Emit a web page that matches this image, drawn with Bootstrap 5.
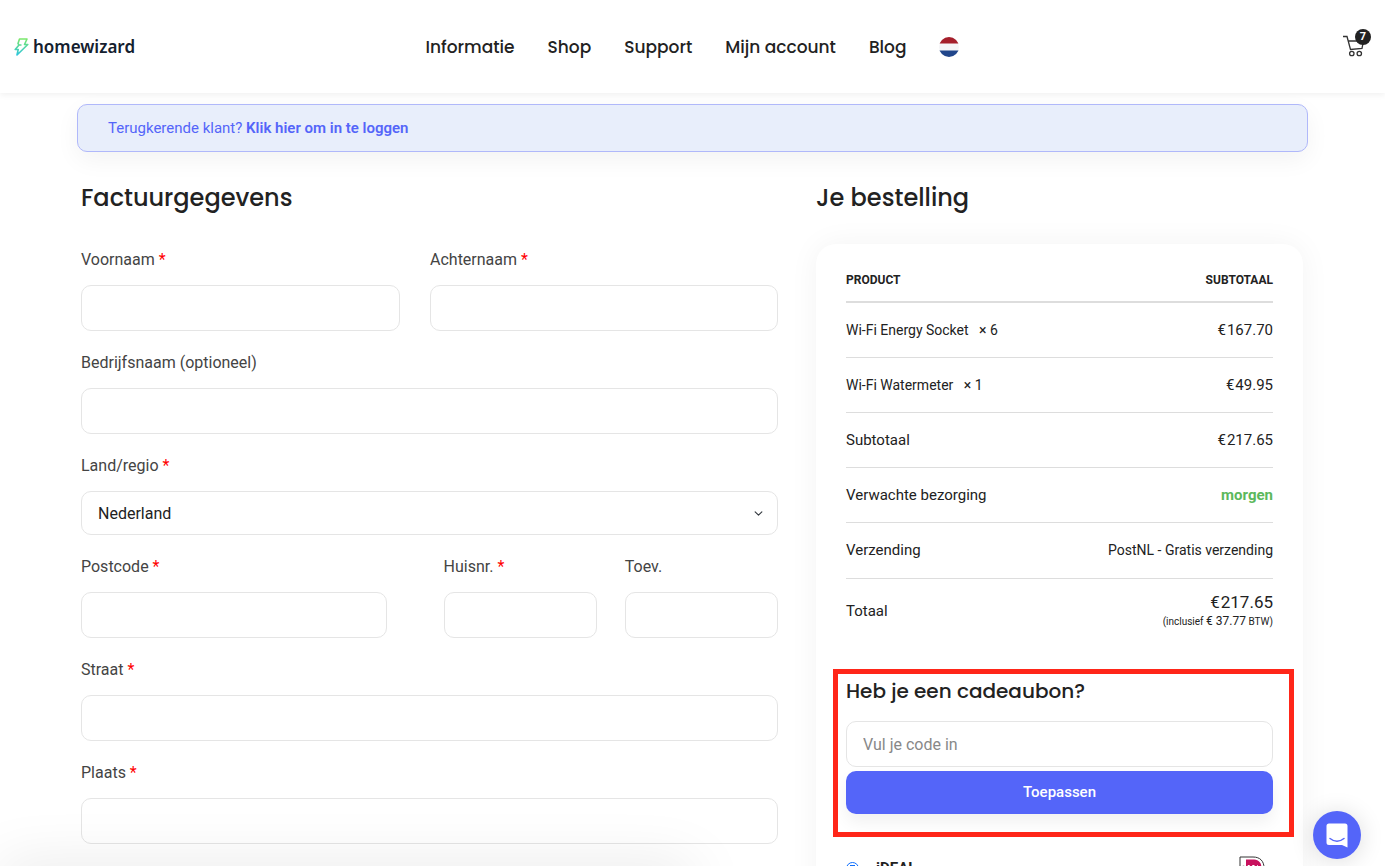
<!DOCTYPE html>
<html lang="nl">
<head>
<meta charset="utf-8">
<meta name="viewport" content="width=device-width, initial-scale=1">
<title>Afrekenen - HomeWizard</title>
<link href="https://cdn.jsdelivr.net/npm/bootstrap@5.3.0/dist/css/bootstrap.min.css" rel="stylesheet">
<style>
:root { --hw-blue: #5465f9; --hw-ink: #222; --hw-line: #e5e5e5; }
body { font-family: Roboto, "Liberation Sans", sans-serif; font-size: 16px; line-height: 24px; color: var(--hw-ink); height: 100vh; overflow: hidden; background: #fff; }
a { text-decoration: none; }
h2, h3, .main-menu { font-family: Poppins, Inter, sans-serif; font-weight: 500; color: var(--hw-ink); }
h2 { font-size: 24px; line-height: 36px; }
h3 { font-size: 20px; line-height: 30px; }
.site-header { height: 93px; padding: 0 14px; box-shadow: 0 2px 6px rgba(0,0,0,.06); }
.site-header .side { flex: 1 1 0; padding-top: 5px; }
.brand { font-family: "Noto Sans", sans-serif; font-weight: 600; font-size: 17px; color: #14202e; }
.main-menu { gap: 33px; font-size: 17px; }
.main-menu a { color: var(--hw-ink); }
.cart-count { width: 16px; height: 16px; top: -6px; right: -7px; font-size: 11px; line-height: 16px; background: #222; }
.cart-link { margin-right: 7px; }
.shell { max-width: 1255px; padding: 11px 12px 0; }
.login-note { padding: 11px 30px; font-size: 15px; border: 1px solid #b0b8fa; border-radius: 10px; background: #e8eefb; color: var(--hw-blue); box-shadow: 0 8px 24px rgba(0,0,0,.05); }
.login-note a { color: var(--hw-blue); font-weight: 600; }
.checkout { display: grid; grid-template-columns: 697fr 487fr; gap: 38px; padding: 28px 5px 0 4px; }
.billing h2 { margin-bottom: 31px; }
.order h2 { margin-bottom: 28px; }
.field { margin-bottom: 19px; }
.field label { display: block; line-height: 26px; margin-bottom: 12px; color: #444; }
.field abbr { color: #f00; text-decoration: none; cursor: default; }
.form-control, .form-select { border-color: var(--hw-line); border-radius: 10px; padding: 0 16px; height: 46px; color: var(--hw-ink); }
.form-select { height: 44px; padding-top: 2px; background-size: 9px; background-position: right 14px center; }
.form-control::placeholder { color: #888; }
.name-row { display: grid; grid-template-columns: 319fr 348fr; gap: 30px; }
.address-row { display: grid; grid-template-columns: 334fr 153fr 153fr; gap: 28px; }
.address-row .wide { padding-right: 29px; }
.panel { padding: 15px 30px; border-radius: 20px; box-shadow: 0 0 30px rgba(0,0,0,.05); min-height: 900px; }
.totals { margin: 0; width: 100%; font-size: 15px; line-height: 24px; }
.totals th, .totals td { height: 55px; padding: 0; font-weight: 400; border-bottom: 1px solid #ddd; vertical-align: middle; }
.totals th:last-child, .totals td:last-child { text-align: right; }
.totals thead th { height: 43px; font-size: 12px; font-weight: 700; border-bottom: 2px solid #ddd; }
.totals .item, .totals .method { font-size: 14px; }
.totals .qty { margin-left: 7px; }
.totals .cur { margin-right: 1px; }
.totals .shipping > * { height: 56px; }
.totals .grand > * { height: 66px; border: 0; }
.totals .sum { display: block; font-size: 17px; line-height: 20px; }
.totals .vat { display: block; font-size: 10px; line-height: 18px; }
.totals .vat span { font-size: 12px; }
.totals .eta { color: #5cb85c; font-weight: 700; }
.coupon { margin: 25px -21px 0 -13px; padding: 2px 16px 18px 8px; border: 5px solid #ff2619; }
.coupon h3 { margin-bottom: 15px; }
.coupon .btn { height: 43px; margin-top: 4px; border: 0; border-radius: 10px; background: var(--hw-blue); color: #fff; font-size: 15px; font-weight: 500; box-shadow: 0 8px 16px rgba(0,0,0,.06); }
.pay { margin-top: 19px; gap: 17px; }
.pay .form-check-input { width: 13px; height: 13px; margin: 0; background-color: #fff; border: 1px solid #0d6efd; background-size: 100% 100%; }
.pay .form-check-input:checked { background-image: radial-gradient(circle, #0d6efd 0 4px, transparent 4px); background-color: #fff; }
.pay label { font-size: 15px; font-weight: 700; }
.chat { position: fixed; right: 24px; bottom: 7px; width: 48px; height: 48px; background: var(--hw-blue); box-shadow: 0 2px 24px rgba(0,0,0,.14); }
.edge-shade { position: fixed; left: 0; top: 100%; width: 50%; height: 40px; box-shadow: 0 0 60px rgba(0,0,0,.1); }
</style>
</head>
<body>
<header class="site-header d-flex align-items-center bg-white position-relative">
  <div class="side">
    <a class="brand d-inline-flex align-items-center" href="#">
      <svg width="15" height="18" viewBox="0 0 15 18" class="me-1" aria-hidden="true"><defs><linearGradient id="bolt" x1="0" y1="0" x2="0" y2="1"><stop offset="0" stop-color="#7be86b"/><stop offset="1" stop-color="#2cc5dd"/></linearGradient></defs><path d="M5.500 1H13L10.500 6.500H13.800L3 17L4.200 11.500H1.200L5 7L4 5.500zM5 7H7.500" fill="none" stroke="url(#bolt)" stroke-width="1.600" stroke-linejoin="round"/></svg><span>homewizard</span></a>
  </div>
  <nav class="main-menu d-flex align-items-center">
    <a href="#">Informatie</a><a href="#">Shop</a><a href="#">Support</a><a href="#">Mijn account</a><a href="#">Blog</a>
    <a href="#" class="d-flex" aria-label="Nederlands"><svg width="20" height="20" viewBox="0 0 20 20"><clipPath id="round"><circle cx="10" cy="10" r="10"/></clipPath><g clip-path="url(#round)"><path fill="#f5f5f7" d="M0 0h20v20H0z"/><path fill="#a51f2b" d="M0 0h20v6.500H0z"/><path fill="#21468b" d="M0 13.500h20V20H0z"/></g></svg></a>
  </nav>
  <div class="side text-end">
    <a class="cart-link position-relative d-inline-flex" href="#" aria-label="Winkelwagen"><svg width="21" height="22" viewBox="0 0 21 22" fill="none" stroke="#333" stroke-width="1.300"><path d="M0 1.500H4L7.500 14.500 19 13.500 20.500 6H5.500"/><circle cx="8.800" cy="18.500" r="2.200"/><circle cx="16.300" cy="18.500" r="2.200"/></svg><span class="cart-count position-absolute rounded-circle text-white text-center fw-bold">7</span></a>
  </div>
</header>
<main class="shell mx-auto">
  <div class="login-note">Terugkerende klant? <a href="#">Klik hier om in te loggen</a></div>
  <div class="checkout">
    <form class="billing">
      <h2>Factuurgegevens</h2>
      <div class="name-row">
        <div class="field"><label for="first">Voornaam <abbr>*</abbr></label><input id="first" class="form-control"></div>
        <div class="field"><label for="last">Achternaam <abbr>*</abbr></label><input id="last" class="form-control"></div>
      </div>
      <div class="field"><label for="company">Bedrijfsnaam (optioneel)</label><input id="company" class="form-control"></div>
      <div class="field"><label for="country">Land/regio <abbr>*</abbr></label><select id="country" class="form-select"><option>Nederland</option></select></div>
      <div class="address-row">
        <div class="field wide"><label for="zip">Postcode <abbr>*</abbr></label><input id="zip" class="form-control"></div>
        <div class="field"><label for="nr">Huisnr. <abbr>*</abbr></label><input id="nr" class="form-control"></div>
        <div class="field"><label for="add">Toev.</label><input id="add" class="form-control"></div>
      </div>
      <div class="field"><label for="street">Straat <abbr>*</abbr></label><input id="street" class="form-control"></div>
      <div class="field"><label for="city">Plaats <abbr>*</abbr></label><input id="city" class="form-control"></div>
    </form>
    <section class="order">
      <h2>Je bestelling</h2>
      <div class="panel bg-white">
        <table class="totals">
          <thead><tr><th>PRODUCT</th><th>SUBTOTAAL</th></tr></thead>
          <tbody>
            <tr><td class="item">Wi-Fi Energy Socket <span class="qty">× 6</span></td><td><span class="cur">€</span>167.70</td></tr>
            <tr><td class="item">Wi-Fi Watermeter <span class="qty">× 1</span></td><td><span class="cur">€</span>49.95</td></tr>
          </tbody>
          <tfoot>
            <tr><th>Subtotaal</th><td><span class="cur">€</span>217.65</td></tr>
            <tr><th>Verwachte bezorging</th><td class="eta">morgen</td></tr>
            <tr class="shipping"><th>Verzending</th><td class="method">PostNL - Gratis verzending</td></tr>
            <tr class="grand"><th>Totaal</th><td><span class="sum"><span class="cur">€</span>217.65</span><span class="vat">(inclusief <span>€ 37.77</span> BTW)</span></td></tr>
          </tfoot>
        </table>
        <form class="coupon">
          <h3>Heb je een cadeaubon?</h3>
          <input class="form-control" placeholder="Vul je code in" aria-label="Vul je code in">
          <button type="button" class="btn w-100">Toepassen</button>
        </form>
        <div class="pay d-flex align-items-center">
          <input class="form-check-input" type="radio" id="ideal" name="pay" checked>
          <label for="ideal">iDEAL</label>
          <svg class="ms-auto me-2" width="26" height="24" viewBox="0 0 26 24" aria-hidden="true"><path d="M1 1H14C21 1 25 5 25 12S21 23 14 23H1z" fill="#fff" stroke="#333"/><path d="M7 3.500H13.500C19 3.500 22.500 6 22.500 12S19 20.500 13.500 20.500H7z" fill="#c8105d"/><circle cx="4.500" cy="11.500" r="1.800"/><path d="M3 14h3v6H3z"/><path d="M9 9.500v4h1.500q1.500-2 0-4zM15.500 9.500h-2v4h2M13.500 11.500h2M17 13.500l1.500-4 1.500 4" fill="none" stroke="#fff"/></svg>
        </div>
      </div>
    </section>
  </div>
</main>
<div class="edge-shade"></div>
<button class="chat btn rounded-circle p-0 border-0 d-flex align-items-center justify-content-center" aria-label="Chat"><svg width="22" height="25" viewBox="0 0 22 25" aria-hidden="true"><path d="M3 .500H19Q21.500.500 21.500 3V24.500L16 22H3Q.500 22 .500 19.500V3Q.500.500 3 .500z" fill="#fff"/><path d="M4 15.500Q11 21 18 15.500" fill="none" stroke="#5465f9" stroke-width="1.500" stroke-linecap="round"/></svg></button>
<script src="https://cdn.jsdelivr.net/npm/bootstrap@5.3.0/dist/js/bootstrap.bundle.min.js"></script>
</body>
</html>
